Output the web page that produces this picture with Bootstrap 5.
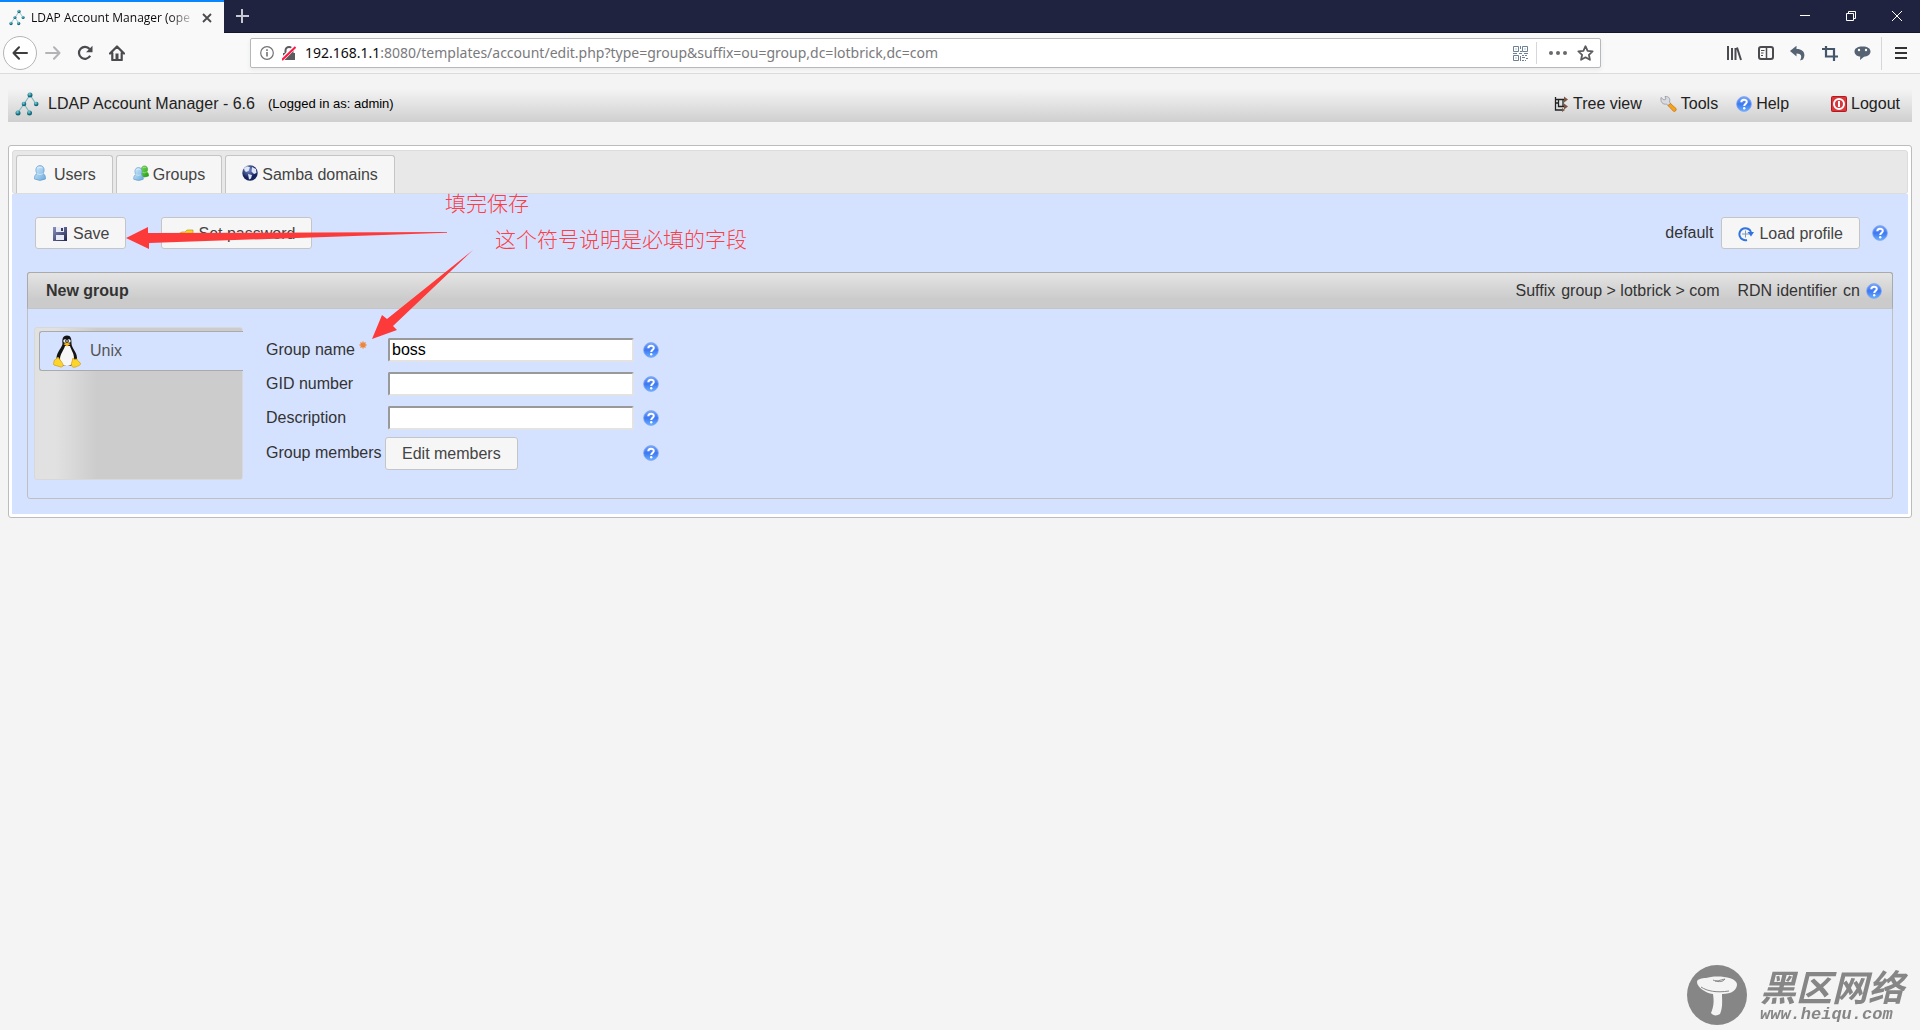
<!DOCTYPE html>
<html lang="en">
<head>
<meta charset="utf-8">
<meta name="viewport" content="width=device-width, initial-scale=1">
<title>LDAP Account Manager</title>
<link rel="stylesheet" href="https://cdn.jsdelivr.net/npm/bootstrap@5.3.0/dist/css/bootstrap.min.css">
<style>
body{background:#f4f4f4;color:#333;font:16px/22px "Liberation Sans",Arial,sans-serif}
svg{display:block;flex:none}
a{color:inherit;text-decoration:none}
button{font:inherit}
.bare{background:none;border:0;padding:0;color:inherit}
/* browser window */
.titlebar{background:#202340;height:33px;border-bottom:1px solid #15162e;font-family:"Open Sans","Noto Sans",sans-serif}
.pagetab{width:224px;height:33px;margin-bottom:-1px;background:#f9f9fa;border-top:2px solid #0a84ff;padding:0 12px 0 9px;gap:6px;font-size:12px;color:#0c0c0d}
.tabtitle{flex:1;white-space:nowrap;-webkit-mask-image:linear-gradient(to right,#000 84%,transparent);mask-image:linear-gradient(to right,#000 84%,transparent)}
.winbuttons{gap:34px;padding-right:17px;color:#fff}
.toolbar{background:#f9f9fa;height:41px;border-bottom:1px solid #dcdcdc;padding:0 13px 0 3px;color:#4a4a4f}
.backbtn{width:34px;height:34px;border:1px solid #b5b5b5;border-radius:50%;background:#fff;color:#3d3d40}
.urlbox{height:30px;background:#fff;border:1px solid #b8b8ba;border-radius:2px;margin:0 125px 0 125px;padding:0 6px 0 9px;font:14px/20px "Noto Sans","Open Sans",sans-serif}
.urlbox label{color:#0c0c0d;margin-left:9px}
.urlbox input{border:0;padding:0;outline:0;color:#7a7a7d;background:none;min-width:0}
.vline{width:1px;background:#d7d7db}
.menuline{height:33px;margin:0 -3px 0 -6px}
/* application header */
.apphead{margin:9px 8px 0;height:39px;padding:2px 12px 0 7px;background:linear-gradient(#f4f4f4 15%,#cfcfcf);color:#222}
.brandline{gap:9px}
.applinks{gap:18px}
.loggedin{font-size:13px;color:#000}
/* main frame */
.frame{margin:23px 8px 0;background:#fff;border:1px solid #bcbcbc;border-radius:3px;padding:4px 3px 3px}
.tabstrip{height:44px;background:#e8e8e8;border:1px solid #dcdcdc;border-radius:3px;padding:4px 3px 0;gap:3px}
.tabstrip a{background:#f6f6f6;border:1px solid #c5c5c5;border-bottom:0;border-radius:3px 3px 0 0;padding:0 16px;color:#444}
.panel{background:#d5e2ff;padding:23px 15px 15px}
.actions{padding:0 5px 0 8px;margin-bottom:23px}
.savegroup{gap:35px}
.uibtn{height:32px;background:#f6f6f6;border:1px solid #c5c5c5;border-radius:3px;padding:1px 16px 0;color:#444}
.groupbox{border:1px solid #bfbfbf;border-radius:3px}
.grouphead{height:37px;margin:-1px -1px 0;border:1px solid #aaa;border-bottom-color:#c5c5c5;border-radius:3px 3px 0 0;background:linear-gradient(#e4e4e4,#cbcbcb 75%);padding:0 10px 0 18px}
.suffixline{gap:6px}
.groupbody{padding:18px 6px 18px;gap:23px}
.sidetabs{width:209px;height:153px;border:1px solid #d8d8d8;border-radius:3px;padding:3px 0 0 4px;background:linear-gradient(to right,#e1e1e1 10%,#ccc 30%)}
.sidetabs a{height:40px;background:#d5e2ff;border:1px solid #aaa;border-right:0;border-radius:3px 0 0 3px;padding-left:13px;gap:9px;color:#555;margin-right:-1px}
.fields{padding-top:6px}
.fieldrow{display:grid;grid-template-columns:119px 258px 16px;align-items:center;height:34px}
.fieldrow input{width:246px;height:24px;margin-left:3px;padding:0 2px;border:2px solid;border-color:#999 #e3e3e3 #e3e3e3 #999;border-radius:2px;background:#fff;color:#000;line-height:20px}
.fieldrow .uibtn{height:33px}
.fieldrow:last-child{margin-top:1px}
/* red remarks over the form */
.remarks{left:0;top:0;pointer-events:none}
.remark{color:#fb3f45;font:300 21px/24px "Noto Sans CJK SC",sans-serif;white-space:nowrap}
.remark-save{left:445px;top:116px}
.remark-required{left:495px;top:152px}
.sitemark{position:fixed;right:16px;bottom:4px;color:#868686;gap:12px}
.sitename{font:italic 700 36px/40px "Noto Sans CJK SC",sans-serif}
.siteurl{font:italic bold 17px/20px "Liberation Mono",monospace}
</style>
<script src="https://cdn.jsdelivr.net/npm/bootstrap@5.3.0/dist/js/bootstrap.bundle.min.js"></script>
</head>
<body>
<svg width="0" height="0" class="position-absolute" aria-hidden="true">
 <defs>
  <linearGradient id="blue" x2="0" y2="1"><stop stop-color="#79a5f8"/><stop offset=".5" stop-color="#3d77f2"/><stop offset="1" stop-color="#66b0ff"/></linearGradient>
  <linearGradient id="sky" x2="1" y2="1"><stop stop-color="#d8eefd"/><stop offset="1" stop-color="#6ba9dc"/></linearGradient>
  <linearGradient id="leaf" x2="1" y2="1"><stop stop-color="#7de05a"/><stop offset="1" stop-color="#1f9a10"/></linearGradient>
  <radialGradient id="globe" cx=".4" cy=".3"><stop stop-color="#7c93d0"/><stop offset="1" stop-color="#15235f"/></radialGradient>
  <radialGradient id="ball" cx=".4" cy=".3"><stop stop-color="#7fd4e2"/><stop offset="1" stop-color="#14697a"/></radialGradient>
  <linearGradient id="disk" x2="1" y2="1"><stop stop-color="#8b95c0"/><stop offset="1" stop-color="#20244f"/></linearGradient>
  <symbol id="help" viewBox="0 0 16 16"><circle cx="8" cy="8" r="7.400" fill="url(#blue)" stroke="#7fa8f5" stroke-width=".8"/><path d="M5.300 6.200C5.300 2.900 10.800 2.900 10.800 6C10.800 7.800 8.200 7.900 8.200 9.900" fill="none" stroke="#fff" stroke-width="2"/><circle cx="8.200" cy="12.200" r="1.200" fill="#fff"/></symbol>
  <symbol id="ldap" viewBox="0 0 24 24"><path d="M15 3 9 12 2.500 21M9 12l6 9M15 3l6 9" fill="none" stroke="#7db9c4" stroke-width="1.200"/><g fill="url(#ball)"><circle cx="15" cy="3" r="2.500"/><circle cx="9" cy="12" r="2.300"/><circle cx="21.200" cy="12" r="2.300"/><circle cx="3" cy="21" r="2.500"/><circle cx="14.500" cy="21" r="2.500"/></g></symbol>
  <symbol id="person" viewBox="0 0 12 16"><path d="M3 8.500C1 6 1.500 .6 6 .6S11 6 9 8.500C11 9.500 11.600 11.500 11.500 14Q6 16.800.5 14C.4 11.500 1 9.500 3 8.500Z"/><path d="M2.800 8.600Q6 10.600 9.200 8.600M3.600 3Q6 1.600 8.400 3" fill="none" stroke="#fff" stroke-opacity=".7"/></symbol>
 </defs>
</svg>

<header>
 <div class="titlebar d-flex justify-content-between">
  <div class="d-flex align-items-center">
   <div class="pagetab d-flex align-items-center"><svg width="16" height="17"><use href="#ldap"/></svg>
    <span class="tabtitle">LDAP Account Manager (ope</span>
    <button class="bare" aria-label="Close tab"><svg width="10" height="10" stroke="#4a4a4f" stroke-width="1.800"><path d="m1 1 8 8M9 1 1 9"/></svg></button></div>
   <button class="bare ms-2 ps-1" aria-label="New tab"><svg width="14" height="14" stroke="#c8c8d2" stroke-width="2"><path d="M6 0v14M0 7h13"/></svg></button>
  </div>
  <div class="winbuttons d-flex align-items-center">
   <button class="bare" aria-label="Minimize"><svg width="12" height="12" stroke="#fff"><path d="M1 5.500h10"/></svg></button>
   <button class="bare" aria-label="Restore"><svg width="12" height="12" fill="none" stroke="#fff"><path d="M1.500 3.500h7v7h-7zM3.500 3V1.500h7v7H9"/></svg></button>
   <button class="bare" aria-label="Close"><svg width="12" height="12" stroke="#fff"><path d="m1 1 10 10M11 1 1 11"/></svg></button>
  </div>
 </div>
 <nav class="toolbar d-flex align-items-center" aria-label="Browser toolbar">
  <div class="d-flex align-items-center">
   <button class="backbtn p-0 d-flex align-items-center justify-content-center" aria-label="Back"><svg width="16" height="14" fill="none" stroke="currentColor" stroke-width="2" stroke-linecap="round" stroke-linejoin="round"><path d="M15 7H1.500M7 1.200 1.500 7 7 12.800"/></svg></button>
   <button class="bare ms-2" aria-label="Forward"><svg width="16" height="14" fill="none" stroke="#b4b4b6" stroke-width="2" stroke-linecap="round" stroke-linejoin="round"><path d="M1 7h13.500M9 1.200 14.500 7 9 12.800"/></svg></button>
   <button class="bare ms-3" aria-label="Reload"><svg width="16" height="16" fill="none" stroke="currentColor" stroke-width="2.200"><path d="M13.200 10.800A6 6 0 1 1 12.600 4"/><path d="M15.500.8v6.500H9z" fill="currentColor" stroke="none"/></svg></button>
   <button class="bare ms-3" aria-label="Home"><svg width="16" height="16"><path d="M1 8.500 8 1.500l7 7M3.300 8v7h9.400V8" fill="none" stroke="currentColor" stroke-width="2.200" stroke-linejoin="round" stroke-linecap="round"/><path d="M6.500 8.500h3V15h-3z" fill="currentColor"/></svg></button>
  </div>
  <div class="urlbox flex-grow-1 d-flex align-items-center shadow-sm">
   <svg width="14" height="14" fill="none" stroke="#737373"><circle cx="7" cy="7" r="6.300" stroke-width="1.200"/><path d="M7 6v4.500M7 3.200V5" stroke-width="1.600"/></svg>
   <svg class="ms-2" width="14" height="15"><path d="M1 7h12v7H1z" fill="#5b5b5f"/><path d="M3.500 7V4.500a3.500 3.500 0 0 1 7 0V7" fill="none" stroke="#5b5b5f" stroke-width="2"/><path d="M0 13.500 13 .8" stroke="#fff" stroke-width="4"/><path d="M0 14 13.500 1" stroke="#ff1744" stroke-width="2"/></svg>
   <label for="url">192.168.1.1</label><input class="flex-grow-1" id="url" value=":8080/templates/account/edit.php?type=group&amp;suffix=ou=group,dc=lotbrick,dc=com">
   <svg width="15" height="15" fill="none" stroke="#6d8096"><path d="M.5.500h5v5h-5zM9.500.500h5v5h-5zM.5 9.500h5v5h-5zM2.500 3h1M11.500 3h1M2.500 12h1M7.500 0v3M7 5.500h2M0 7.500h4M6 7.500h3M11 7.500h4M7.500 10v5M9 9.500h2M12 9.500h2M9 11.500h3M13 12.500h2M9 14.500h2M12 14.500h1"/></svg>
   <span class="vline ms-2" style="height:22px"></span>
   <svg class="ms-2 me-2" width="24" height="6" fill="#69696d"><circle cx="6" cy="3" r="2"/><circle cx="13" cy="3" r="2"/><circle cx="20" cy="3" r="2"/></svg>
   <svg width="17" height="16" fill="none" stroke="#5b5b5f" stroke-width="1.800" stroke-linejoin="round"><path d="m8.500 1.200 2.100 4.600 5 .6-3.700 3.400 1 5-4.400-2.500-4.400 2.500 1-5L1.400 6.400l5-.6z"/></svg>
  </div>
  <div class="d-flex align-items-center gap-3">
   <button class="bare" aria-label="Library"><svg width="16" height="16" stroke="currentColor" stroke-width="2"><path d="M2 1v14M6 3v12M9.500 3v12M11 2.500 15 15"/></svg></button>
   <button class="bare" aria-label="Sidebars"><svg width="16" height="16" fill="none" stroke="currentColor"><rect x="1" y="2" width="14" height="12" rx="2" stroke-width="2"/><path d="M8.500 2v12" stroke-width="1.500"/><path d="M3 5.500h3.500M3 8h2.500M3 10.500h2"/></svg></button>
   <button class="bare" aria-label="Undo"><svg width="16" height="16" fill="#566373"><path d="M0 6 6.500.800V4c6.500-.2 10 4.500 6.500 10.500l-3 1C12.500 11 11 8.500 6.500 8.500v3z"/></svg></button>
   <button class="bare" aria-label="Crop"><svg width="16" height="16" fill="none" stroke="#46566a" stroke-width="2.200"><path d="M0 4h12v12M4 1v10.500h12"/></svg></button>
   <button class="bare" aria-label="Chat"><svg width="17" height="16"><path d="M8.500 1.500c5 0 8 2 8 5s-3 5-6.500 5.200L6 15l.2-3.400C3 11.200.5 9.600.5 6.500c0-3 3-5 8-5z" fill="#566373"/><circle cx="5" cy="5" r="1.200" fill="#fff"/><circle cx="12" cy="5" r="1.200" fill="#fff"/></svg></button>
   <span class="vline menuline"></span>
   <button class="bare" aria-label="Menu"><svg width="12" height="12" stroke="#333" stroke-width="2"><path d="M0 1h12M0 6h12M0 11h12"/></svg></button>
  </div>
 </nav>
</header>

<main class="position-relative overflow-hidden">
 <div class="apphead d-flex align-items-center justify-content-between">
  <div class="brandline d-flex align-items-center"><svg width="24" height="24"><use href="#ldap"/></svg><a href="#">LDAP Account Manager - 6.6</a><span class="loggedin ms-1">(Logged in as: admin)</span></div>
  <nav class="applinks d-flex align-items-center" aria-label="Application">
   <a href="#" class="d-flex align-items-center gap-1"><svg width="15" height="16" fill="none" stroke="#222" stroke-width="1.300"><path d="M1.500 1v13H9M1.500 3.500H10M4.500 3.500v7H10M9 3.500v7M1.500 7H5"/><path d="m10 .5 4 3-4 3zM10 7.500l4 3-4 3zM8 12l3 2-3 2z" fill="#7a5546" stroke="none"/></svg>Tree view</a>
   <a href="#" class="d-flex align-items-center gap-1"><svg width="17" height="16"><path d="M1 1.500 4 4l2-1-1-2.500c4-.5 5.500 2.500 4.500 5.500l1.500 2-2.500 2L6.500 8C3 9 .2 6 1 1.500z" fill="#d9dbe2" stroke="#8a8c96" stroke-width=".7"/><path d="m8 9.500 2.500-2 5.500 5c1 1.500-1 3.500-2.500 2.800z" fill="#f7a21b" stroke="#c36c08" stroke-width=".7"/></svg>Tools</a>
   <a href="#" class="d-flex align-items-center gap-1 me-4"><svg width="16" height="16"><use href="#help"/></svg>Help</a>
   <a href="#" class="d-flex align-items-center gap-1"><svg width="16" height="16"><rect x=".5" y=".5" width="15" height="15" rx="1" fill="#d9363c" stroke="#b9161d"/><circle cx="8" cy="8" r="5" fill="none" stroke="#fff" stroke-width="2"/><path d="M8 5v6" stroke="#fff" stroke-width="2"/></svg>Logout</a>
  </nav>
 </div>

 <div class="frame">
  <nav class="tabstrip d-flex" aria-label="Account types">
   <a href="#" class="d-flex align-items-center gap-2"><svg class="mb-1" width="13" height="16" fill="url(#sky)" stroke="#5b9bd0" stroke-width=".7"><use href="#person" width="12" height="16" x="1"/></svg>Users</a>
   <a href="#" class="d-flex align-items-center gap-1"><svg class="mb-1" width="16" height="16"><use href="#person" x="7" y="0" width="9" height="13" fill="url(#leaf)" stroke="#2c9c1c" stroke-width=".7"/><use href="#person" x="0" y="2" width="11" height="14" fill="url(#sky)" stroke="#5b9bd0" stroke-width=".7"/></svg>Groups</a>
   <a href="#" class="d-flex align-items-center gap-1"><svg class="mb-1" width="16" height="16"><circle cx="8" cy="8" r="7.700" fill="url(#globe)"/><path d="m2 3 3-1.800 3 1L6.500 6 4 7 2.500 5.500zM10 2l4 2 .5 4-2.500 1L9.500 6.500zM6 9l4 1-1 3.500-2 1z" fill="#dfe6f8"/></svg>Samba domains</a>
  </nav>
  <div class="panel">
   <div class="actions d-flex align-items-center justify-content-between">
    <div class="savegroup d-flex">
     <button class="uibtn d-flex align-items-center"><svg class="me-1" width="17" height="16"><path d="M1 1h14v14H1z" fill="url(#disk)"/><path d="M4 1h8v5H4zM4 9h8v5H4z" fill="#e8ebf5"/><path d="M9 2h2v3H9z" fill="#36406f"/></svg>Save</button>
     <button class="uibtn d-flex align-items-center"><svg class="me-1" width="16" height="16"><path d="M0 13V8l4-2h3l2-2h6v5l-4 2H8l-3 2z" fill="#f8d525" stroke="#b79a1c" stroke-width=".7"/></svg>Set password</button>
    </div>
    <div class="d-flex align-items-center"><span class="me-2">default</span>
     <button class="uibtn d-flex align-items-center me-2"><svg class="me-1" width="17" height="16" fill="none"><path d="M9 14A6 6 0 1 1 13 6" stroke="#2f74e0" stroke-width="2"/><path d="M9.500 6H16l-3 4.500z" fill="#2f74e0"/><path d="M4 8h7M7.500 4.500v7" stroke="#7f97b8"/></svg>Load profile</button>
     <a href="#" class="ms-1" aria-label="Help on profiles"><svg width="16" height="16"><use href="#help"/></svg></a></div>
   </div>
   <section class="groupbox">
    <div class="grouphead d-flex align-items-center justify-content-between">
     <b>New group</b>
     <div class="suffixline d-flex align-items-center"><span>Suffix</span><span class="me-2">group &gt; lotbrick &gt; com</span><span class="ms-1">RDN identifier</span><span>cn</span><a href="#" aria-label="Help on RDN"><svg width="16" height="16"><use href="#help"/></svg></a></div>
    </div>
    <div class="groupbody d-flex">
     <nav class="sidetabs" aria-label="Modules"><a href="#" class="d-flex align-items-center">
      <svg width="28" height="33" viewBox="0 0 28 33"><path d="M14 .5c-4.500 0-5 4-4.500 8 .2 3-6 9-6 14.500 0 5 4 8 10.500 8s10-3 10-8c0-6-5.500-10-5.500-14.500 0-5-.5-8-4.500-8z" fill="#141414"/><path d="M12 11c-1 4-5 8-5 13 0 4 2 7 7 7s7-4 7-8c0-5-3-8-4-12z" fill="#f7f7f7"/><circle cx="12" cy="6" r="1.700" fill="#fff"/><circle cx="16" cy="6" r="1.700" fill="#fff"/><circle cx="12.500" cy="6" r=".7"/><circle cx="15.500" cy="6" r=".7"/><path d="m10.500 9 3.500-1.500L17.500 9 14 11.500z" fill="#f6b516"/><path d="M5 22 9 27.500c2 3 1 4.500-1 4.500L1 30c-1.500-1 0-2 0-3.500-.5-2 2-1 4-4.500zM20 23c0 2 4 1 4 1 1 3 3 3 3.500 4.500S25 31 22.500 32c-3 1-4.500-1-4-3.500z" fill="#fbd52c" stroke="#d19a0c" stroke-width=".7"/></svg>Unix</a></nav>
     <form class="fields">
      <div class="fieldrow"><label class="d-flex" for="gname">Group name<svg class="ms-1" width="8" height="15" stroke="#ee8434" stroke-width="1.300"><path d="M4 2.500v7M.5 6h7M1.500 3.500l5 5M6.500 3.500l-5 5"/></svg></label><input id="gname" value="boss"><a href="#" aria-label="Help on group name"><svg width="16" height="16"><use href="#help"/></svg></a></div>
      <div class="fieldrow"><label for="gid">GID number</label><input id="gid"><a href="#" aria-label="Help on GID number"><svg width="16" height="16"><use href="#help"/></svg></a></div>
      <div class="fieldrow"><label for="desc">Description</label><input id="desc"><a href="#" aria-label="Help on description"><svg width="16" height="16"><use href="#help"/></svg></a></div>
      <div class="fieldrow"><label for="members">Group members</label><div><button type="button" class="uibtn" id="members">Edit members</button></div><a href="#" aria-label="Help on members"><svg width="16" height="16"><use href="#help"/></svg></a></div>
     </form>
    </div>
   </section>
  </div>
 </div>

 <div class="remarks position-absolute">
  <svg width="480" height="280" fill="#fd3a3a"><path d="m126 164 22-11v6l299-1v.8L149 169v6zM372 265l10-24 5 4 86-69-80 76 4 4z"/></svg>
  <span class="remark remark-save position-absolute">填完保存</span>
  <span class="remark remark-required position-absolute">这个符号说明是必填的字段</span>
 </div>
</main>

<footer class="sitemark d-flex align-items-center">
 <svg width="62" height="62"><circle cx="31" cy="31" r="30" fill="#868686"/><path d="M11 18c0-3 5-4 9-4 8-3 30-2 31 6 0 6-5 10-15 10 0 7 1 13-2 20-3 2-7 2-9-1 3-7 3-12 2-19-8-1-16-7-16-12z" fill="#f4f4f4"/><path d="M27 16c4 2 7 0 12-1-2 3-6 3-10 2M15 23c6 4 15 6 28 4" fill="none" stroke="#868686"/></svg>
 <div><div class="sitename">黑区网络</div><div class="siteurl">www.heiqu.com</div></div>
</footer>
</body>
</html>
